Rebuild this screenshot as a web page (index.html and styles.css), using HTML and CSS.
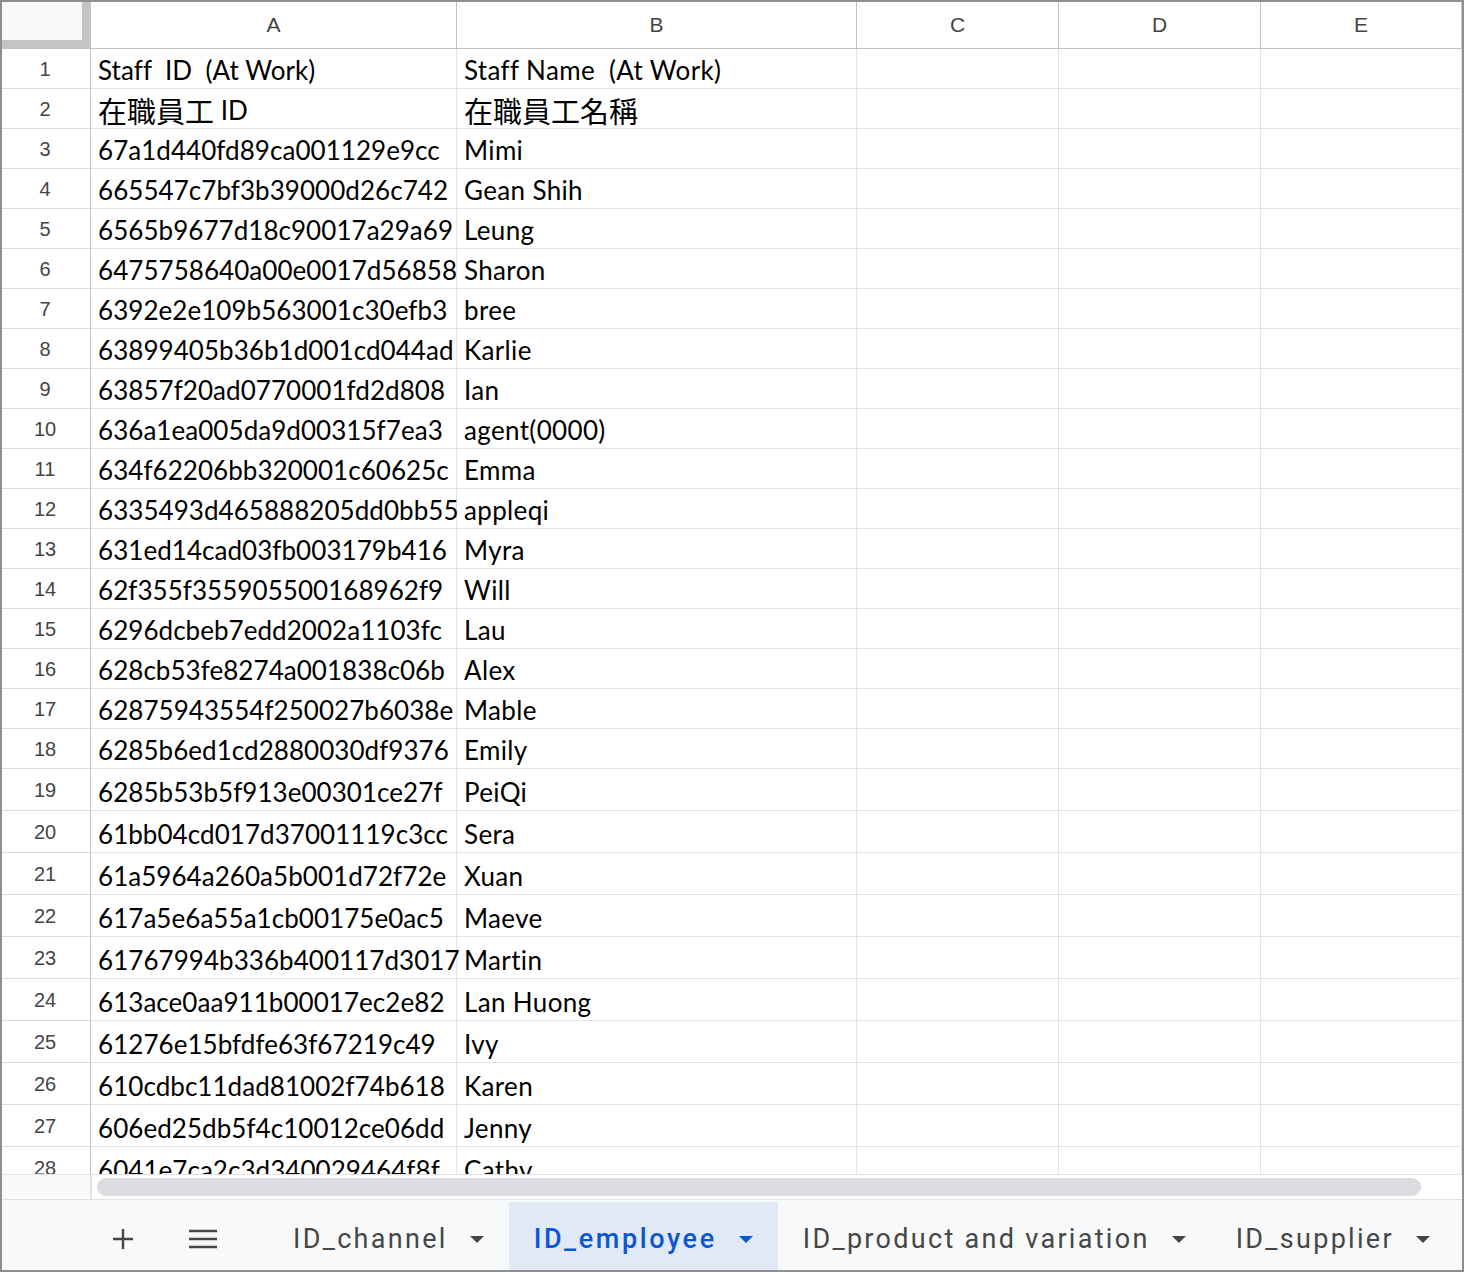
FILE: index.html
```html
<!DOCTYPE html>
<html lang="en">
<head>
    <meta charset="UTF-8">
    <title>ID_employee</title>
    <link rel="stylesheet" href="styles.css">
</head>
<body>
    <div class="frame">
        <div class="sheet">
            <div class="row head">
                <div class="corner"><div class="corner-fill"></div></div>
                <div class="col">A</div>
                <div class="col">B</div>
                <div class="col">C</div>
                <div class="col">D</div>
                <div class="col">E</div>
            </div>
            <div class="row"><div class="num">1</div><div class="cell">Staff  ID  (At Work)</div><div class="cell name">Staff Name  (At Work)</div><div class="cell"></div><div class="cell"></div><div class="cell"></div></div>
            <div class="row"><div class="num">2</div><div class="cell"><span class="cjk">在職員工</span> ID</div><div class="cell"><span class="cjk">在職員工名稱</span></div><div class="cell"></div><div class="cell"></div><div class="cell"></div></div>
            <div class="row"><div class="num">3</div><div class="cell">67a1d440fd89ca001129e9cc</div><div class="cell name">Mimi</div><div class="cell"></div><div class="cell"></div><div class="cell"></div></div>
            <div class="row"><div class="num">4</div><div class="cell">665547c7bf3b39000d26c742</div><div class="cell name">Gean Shih</div><div class="cell"></div><div class="cell"></div><div class="cell"></div></div>
            <div class="row"><div class="num">5</div><div class="cell">6565b9677d18c90017a29a69</div><div class="cell name">Leung</div><div class="cell"></div><div class="cell"></div><div class="cell"></div></div>
            <div class="row"><div class="num">6</div><div class="cell">6475758640a00e0017d56858</div><div class="cell name">Sharon</div><div class="cell"></div><div class="cell"></div><div class="cell"></div></div>
            <div class="row"><div class="num">7</div><div class="cell">6392e2e109b563001c30efb3</div><div class="cell name">bree</div><div class="cell"></div><div class="cell"></div><div class="cell"></div></div>
            <div class="row"><div class="num">8</div><div class="cell">63899405b36b1d001cd044ad</div><div class="cell name">Karlie</div><div class="cell"></div><div class="cell"></div><div class="cell"></div></div>
            <div class="row"><div class="num">9</div><div class="cell">63857f20ad0770001fd2d808</div><div class="cell name">Ian</div><div class="cell"></div><div class="cell"></div><div class="cell"></div></div>
            <div class="row"><div class="num">10</div><div class="cell">636a1ea005da9d00315f7ea3</div><div class="cell name">agent(0000)</div><div class="cell"></div><div class="cell"></div><div class="cell"></div></div>
            <div class="row"><div class="num">11</div><div class="cell">634f62206bb320001c60625c</div><div class="cell name">Emma</div><div class="cell"></div><div class="cell"></div><div class="cell"></div></div>
            <div class="row"><div class="num">12</div><div class="cell">6335493d465888205dd0bb55</div><div class="cell name">appleqi</div><div class="cell"></div><div class="cell"></div><div class="cell"></div></div>
            <div class="row"><div class="num">13</div><div class="cell">631ed14cad03fb003179b416</div><div class="cell name">Myra</div><div class="cell"></div><div class="cell"></div><div class="cell"></div></div>
            <div class="row"><div class="num">14</div><div class="cell">62f355f355905500168962f9</div><div class="cell name">Will</div><div class="cell"></div><div class="cell"></div><div class="cell"></div></div>
            <div class="row"><div class="num">15</div><div class="cell">6296dcbeb7edd2002a1103fc</div><div class="cell name">Lau</div><div class="cell"></div><div class="cell"></div><div class="cell"></div></div>
            <div class="row"><div class="num">16</div><div class="cell">628cb53fe8274a001838c06b</div><div class="cell name">Alex</div><div class="cell"></div><div class="cell"></div><div class="cell"></div></div>
            <div class="row"><div class="num">17</div><div class="cell">62875943554f250027b6038e</div><div class="cell name">Mable</div><div class="cell"></div><div class="cell"></div><div class="cell"></div></div>
            <div class="row"><div class="num">18</div><div class="cell">6285b6ed1cd2880030df9376</div><div class="cell name">Emily</div><div class="cell"></div><div class="cell"></div><div class="cell"></div></div>
            <div class="row tall"><div class="num">19</div><div class="cell">6285b53b5f913e00301ce27f</div><div class="cell name">PeiQi</div><div class="cell"></div><div class="cell"></div><div class="cell"></div></div>
            <div class="row tall"><div class="num">20</div><div class="cell">61bb04cd017d37001119c3cc</div><div class="cell name">Sera</div><div class="cell"></div><div class="cell"></div><div class="cell"></div></div>
            <div class="row tall"><div class="num">21</div><div class="cell">61a5964a260a5b001d72f72e</div><div class="cell name">Xuan</div><div class="cell"></div><div class="cell"></div><div class="cell"></div></div>
            <div class="row tall"><div class="num">22</div><div class="cell">617a5e6a55a1cb00175e0ac5</div><div class="cell name">Maeve</div><div class="cell"></div><div class="cell"></div><div class="cell"></div></div>
            <div class="row tall"><div class="num">23</div><div class="cell">61767994b336b400117d3017</div><div class="cell name">Martin</div><div class="cell"></div><div class="cell"></div><div class="cell"></div></div>
            <div class="row tall"><div class="num">24</div><div class="cell">613ace0aa911b00017ec2e82</div><div class="cell name">Lan Huong</div><div class="cell"></div><div class="cell"></div><div class="cell"></div></div>
            <div class="row tall"><div class="num">25</div><div class="cell">61276e15bfdfe63f67219c49</div><div class="cell name">Ivy</div><div class="cell"></div><div class="cell"></div><div class="cell"></div></div>
            <div class="row tall"><div class="num">26</div><div class="cell">610cdbc11dad81002f74b618</div><div class="cell name">Karen</div><div class="cell"></div><div class="cell"></div><div class="cell"></div></div>
            <div class="row tall"><div class="num">27</div><div class="cell">606ed25db5f4c10012ce06dd</div><div class="cell name">Jenny</div><div class="cell"></div><div class="cell"></div><div class="cell"></div></div>
            <div class="row tall"><div class="num">28</div><div class="cell">6041e7ca2c3d340029464f8f</div><div class="cell name">Cathy</div><div class="cell"></div><div class="cell"></div><div class="cell"></div></div>
        </div>

        <div class="hscroll">
            <div class="hscroll-corner"></div>
            <div class="hscroll-thumb"></div>
        </div>

        <div class="tabbar">
            <div class="tab-btn">
                <svg width="20" height="20" viewBox="0 0 20 20"><path d="M10 0v20M0 10h20" stroke="#444746" stroke-width="2.4" fill="none"/></svg>
            </div>
            <div class="tab-btn">
                <svg width="28" height="20" viewBox="0 0 28 20"><path d="M0 2h28M0 10h28M0 18h28" stroke="#444746" stroke-width="2.6" fill="none"/></svg>
            </div>
            <div class="tabs">
                <div class="tab"><span class="tab-name">ID_channel</span><span class="tab-arrow"></span></div>
                <div class="tab active"><span class="tab-name">ID_employee</span><span class="tab-arrow"></span></div>
                <div class="tab"><span class="tab-name">ID_product and variation</span><span class="tab-arrow"></span></div>
                <div class="tab"><span class="tab-name">ID_supplier</span><span class="tab-arrow"></span></div>
            </div>
        </div>
    </div>
</body>
</html>
```

FILE: styles.css
```css
body {
    margin: 0;
    background-color: #fff;
}

.frame {
    width: 1464px;
    height: 1272px;
    box-sizing: border-box;
    border: 2px solid #8f8f8f;
    display: flex;
    flex-direction: column;
    overflow: hidden;
}

.sheet {
    height: 1172px;
    overflow: hidden;
    flex: none;
}

.row {
    display: grid;
    grid-template-columns: 89px 366px 400px 202px 202px 201px;
    height: 40px;
}

.row.tall {
    height: 42px;
}

.row.head {
    height: 47px;
}

/* top left corner with the freeze handles */
.corner {
    background-color: #c4c4c4;
    border-right: 1px solid #c4c4c4;
    border-bottom: 1px solid #c4c4c4;
}

.corner-fill {
    width: 80px;
    height: 38px;
    background-color: #f8f9fa;
}

.col {
    display: flex;
    align-items: center;
    justify-content: center;
    font-family: "Liberation Sans", Arial, sans-serif;
    font-size: 21px;
    color: #444;
    border-right: 1px solid #c4c4c4;
    border-bottom: 1px solid #c4c4c4;
}

.num {
    display: flex;
    align-items: center;
    justify-content: center;
    font-family: "Liberation Sans", Arial, sans-serif;
    font-size: 20px;
    color: #444;
    border-right: 1px solid #c4c4c4;
    border-bottom: 1px solid #dedede;
    padding-top: 1px;
    padding-right: 2px;
}

.cell {
    display: flex;
    align-items: flex-end;
    box-sizing: border-box;
    padding: 0 0 3px 7px;
    font-family: Lato, "Noto Sans CJK TC", sans-serif;
    font-size: 26px;
    letter-spacing: 0.05px;
    line-height: 30px;
    color: #000;
    white-space: pre;
    border-right: 1px solid #e2e2e2;
    border-bottom: 1px solid #e2e2e2;
}

.cell.name {
    letter-spacing: 0.35px;
}

.cjk {
    font-family: "Noto Sans CJK TC", sans-serif;
    font-size: 29px;
    letter-spacing: 0;
    line-height: 30px;
}

/* horizontal scroll bar */
.hscroll {
    height: 26px;
    flex: none;
    box-sizing: border-box;
    border-top: 1px solid #e1e1e1;
    border-bottom: 1px solid #e1e1e1;
    display: flex;
    align-items: center;
    background-color: #fff;
}

.hscroll-corner {
    width: 88px;
    height: 100%;
    background-color: #f8f9fa;
    border-right: 2px solid #e1e1e1;
}

.hscroll-thumb {
    margin-left: 5px;
    width: 1324px;
    height: 18px;
    border-radius: 9px;
    background-color: #dadce0;
}

/* sheet tabs */
.tabbar {
    flex: 1;
    background-color: #f8f9fa;
    display: flex;
    align-items: stretch;
    padding-left: 97px;
    padding-top: 2px;
}

.tab-btn {
    width: 48px;
    display: flex;
    align-items: center;
    justify-content: center;
    padding-top: 6px;
}

.tab-btn + .tab-btn {
    margin-left: 32px;
}

.tabs {
    display: flex;
    margin-left: 41px;
}

.tab {
    display: flex;
    align-items: center;
    padding: 6px 25px 0 25px;
    font-family: Roboto, "Liberation Sans", sans-serif;
    font-size: 27px;
    letter-spacing: 2.3px;
    color: #444746;
}

.tab-arrow {
    margin-left: 22px;
    width: 0;
    height: 0;
    border-left: 7px solid transparent;
    border-right: 7px solid transparent;
    border-top: 7px solid #444746;
}

.tab.active {
    background-color: #e1e9f7;
    color: #0b57d0;
    font-weight: 500;
    letter-spacing: 2.6px;
}

.tab.active .tab-arrow {
    border-top-color: #0b57d0;
}
```
